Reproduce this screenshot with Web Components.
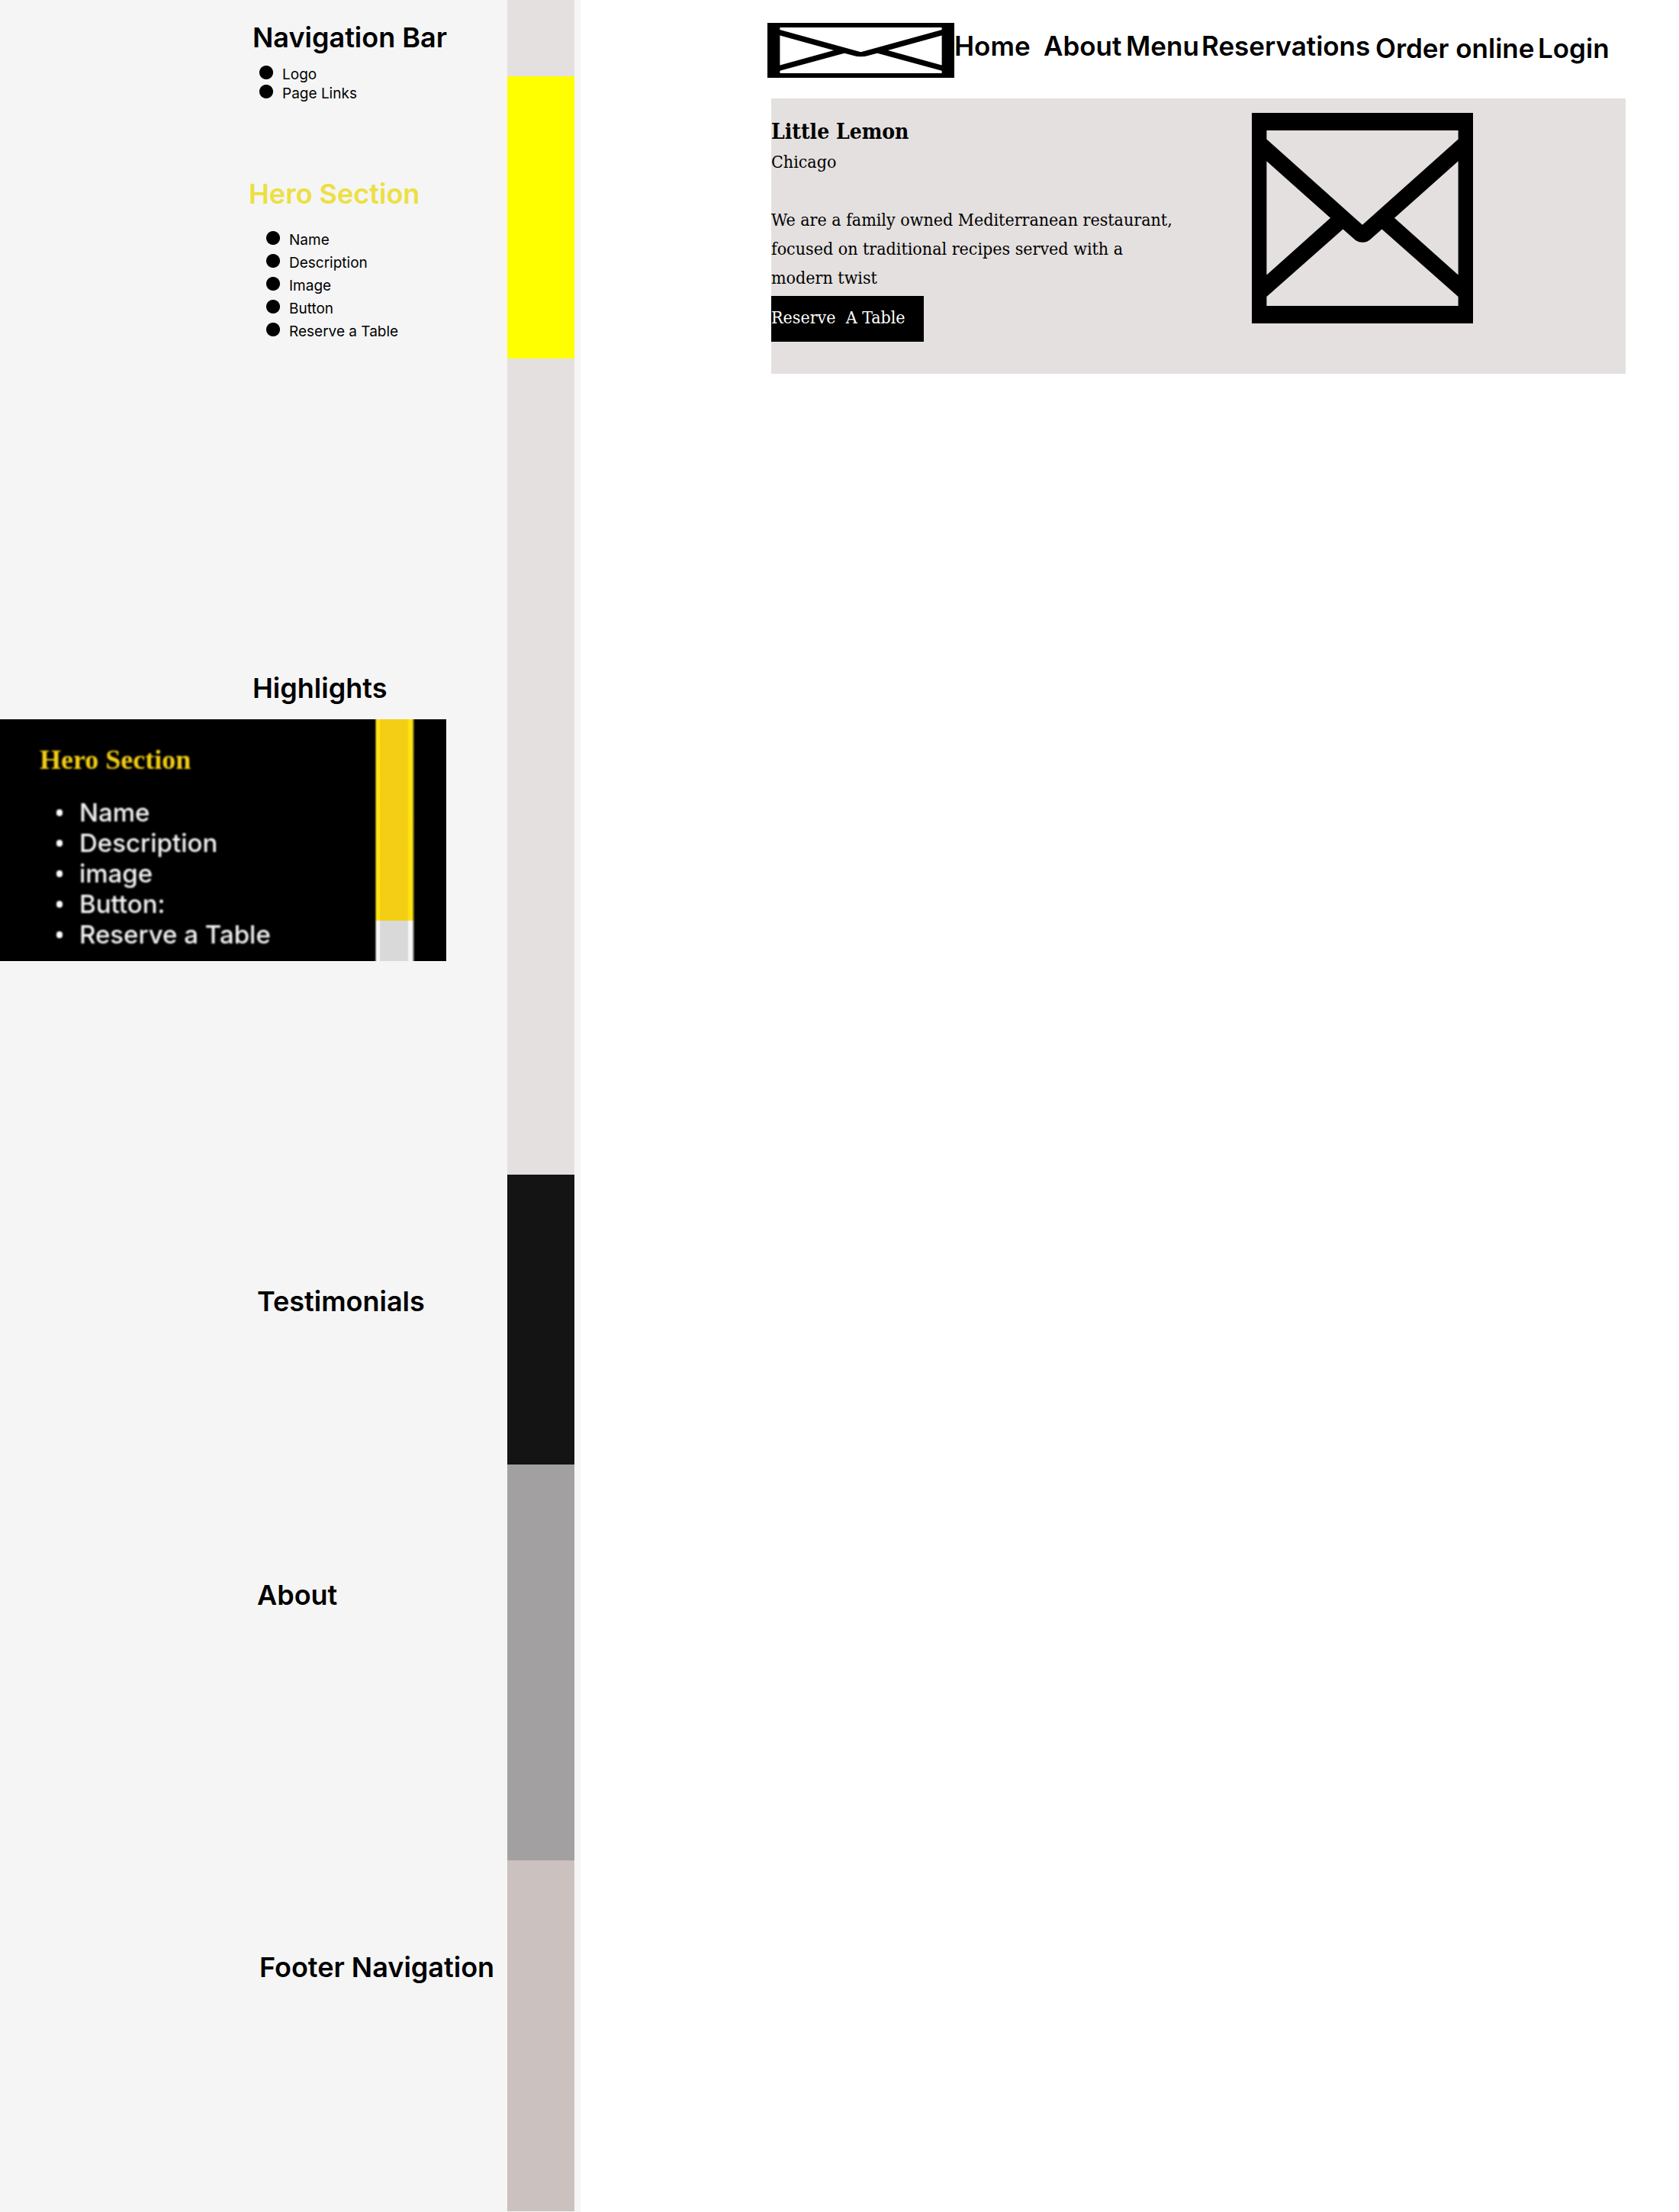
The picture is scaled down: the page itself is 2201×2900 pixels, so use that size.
<!DOCTYPE html>
<html lang="en">
<head>
<meta charset="utf-8">
<title>Little Lemon wireframe</title>
<style>
  body { margin: 0; background: #fff; color: #000; font-family: Inter, "Noto Sans", sans-serif; }
</style>
</head>
<body>
<wire-page>
  <outline-panel slot="outline">
    <outline-section heading="Navigation Bar" style="--top:29px;--indent:331px;--list-indent:9px;--row:25px;--list-gap:13px">
      <li>Logo</li><li>Page Links</li>
    </outline-section>
    <outline-section heading="Hero Section" style="--top:102px;--indent:326px;--list-indent:23px;--row:30px;--list-gap:25px;--heading:#ebe041">
      <li>Name</li><li>Description</li><li>Image</li><li>Button</li><li>Reserve a Table</li>
    </outline-section>
    <outline-section heading="Highlights" style="--top:433px;--indent:331px"></outline-section>
    <hero-note></hero-note>
    <outline-section heading="Testimonials" style="--top:426px;--indent:337px"></outline-section>
    <outline-section heading="About" style="--top:345px;--indent:337px"></outline-section>
    <outline-section heading="Footer Navigation" style="--top:448px;--indent:340px"></outline-section>
  </outline-panel>
  <site-header slot="content"></site-header>
  <site-hero slot="content"></site-hero>
</wire-page>

<script>
const define = (name, html, setup) => customElements.define(name, class extends HTMLElement {
  constructor() {
    super();
    this.attachShadow({ mode: "open" }).innerHTML = html;
  }
  connectedCallback() { if (setup) setup(this); }
});

define("envelope-icon", `
  <style>
    :host { display: block; }
    svg { display: block; width: 100%; height: 100%; }
  </style>
  <svg viewBox="0 0 290 276" preserveAspectRatio="none" aria-hidden="true">
    <path fill-rule="evenodd" d="M0 0H290V276H0Z
      M19.4 23V34.4L145 146.8L270.6 34.4V23Z
      M19.4 63.3V212.6L103 137.8Z
      M270.6 63.3V212.6L187 137.8Z
      M19.4 253V241L119.5 152.4L134 165.2Q138.500 169.800 145 169.800T156 165.200L170.500 152.400L270.600 241V253Z"/>
  </svg>`);

define("outline-section", `
  <style>
    :host { display: block; padding-top: var(--top); padding-left: var(--indent); }
    h2 { margin: 0; font-size: 36px; line-height: 40px; font-weight: 600; color: var(--heading, #000); white-space: nowrap; }
    ul { margin: var(--list-gap, 0) 0 0; padding: 0 0 0 var(--list-indent, 0); list-style: none; }
    ::slotted(li) {
      display: block; height: var(--row); padding-left: 30px; font-size: 19px; line-height: 32px;
      background: radial-gradient(circle at 9px 13px, #000 8.500px, transparent 9.500px) no-repeat;
    }
  </style>
  <h2></h2>
  <ul><slot></slot></ul>`,
  el => { el.shadowRoot.querySelector("h2").textContent = el.getAttribute("heading"); });

define("hero-note", `
  <style>
    :host { display: flex; width: 585px; height: 317px; margin-top: 21px; background: #000; color: #f4f4f4; }
    .copy { flex: 1; padding: 31px 0 0 52px; filter: blur(1px); }
    h3 { margin: 0; font: bold 36px/44px "Liberation Serif", serif; color: #f4ce14; }
    ul { margin: 27px 0 0; padding: 0 0 0 22px; list-style: none; }
    li { display: flex; align-items: center; gap: 22px; font-size: 33px; font-weight: 500; line-height: 40px; white-space: nowrap; }
    li::before { content: ""; width: 8px; height: 9px; border-radius: 4px; background: #fff; }
    .bar { width: 53px; margin-right: 41px; display: flex; flex-direction: column; }
    .bar i { flex: 1; background: linear-gradient(90deg, #000, #ffe414 3px 6px, #f4ce14 8px 43px, #ffe414 45px 49px, #000); }
    .bar i + i { flex: 0 0 53px; background: linear-gradient(90deg, #000, #f6f6f6 3px 6px, #d9d9d9 8px 43px, #f6f6f6 45px 49px, #000); }
  </style>
  <div class="copy">
    <h3>Hero Section</h3>
    <ul><li>Name</li><li>Description</li><li>image</li><li>Button:</li><li>Reserve a Table</li></ul>
  </div>
  <div class="bar"><i></i><i></i></div>`);

define("outline-panel", `
  <style>
    :host { display: flex; background: #f5f5f5; padding-right: 8px; box-sizing: border-box; }
    .sections { flex: 1; min-width: 0; }
    .strip { width: 88px; display: flex; flex-direction: column; }
    .strip div { background: #e4e0df; }
    .nav { height: 100px; }
    .strip .hero { height: 370px; background: #ff0; }
    .highlights { height: 1070px; }
    .strip .testimonials { height: 380px; background: #141414; }
    .strip .about { height: 519px; background: #a2a0a0; }
    .strip .footer { flex: 1; margin-bottom: 1px; background: #cbc1bf; }
  </style>
  <div class="sections"><slot></slot></div>
  <div class="strip">
    <div class="nav"></div><div class="hero"></div><div class="highlights"></div>
    <div class="testimonials"></div><div class="about"></div><div class="footer"></div>
  </div>`);

define("site-header", `
  <style>
    :host { display: flex; margin-left: -5px; padding-top: 30px; }
    envelope-icon { width: 245px; height: 72px; }
    nav { flex: 1; display: flex; padding-top: 10px; }
    ul { display: grid; margin: 0; padding: 0; list-style: none; line-height: 40px; }
    .pages { grid-template-columns: 117px 108px 99px 228px; }
    .account { grid-template-columns: 213px auto; line-height: 46px; }
    a { color: #000; text-decoration: none; font-size: 35px; font-weight: 600; white-space: nowrap; }
  </style>
  <envelope-icon></envelope-icon>
  <nav aria-label="Main">
    <ul class="pages">
      <li><a href="#home">Home</a></li><li><a href="#about">About</a></li>
      <li><a href="#menu">Menu</a></li><li><a href="#reservations">Reservations</a></li>
    </ul>
    <ul class="account">
      <li><a href="#order">Order online</a></li><li><a href="#login">Login</a></li>
    </ul>
  </nav>`);

define("site-hero", `
  <style>
    :host { display: flex; margin-top: 27px; padding: 19px 0 42px; background: #e4e0df; font: 23px/38px "DejaVu Serif Condensed", "DejaVu Serif", serif; }
    .copy { width: 630px; padding-top: 5px; }
    h1 { margin: 0; font-size: 28px; line-height: 40px; font-weight: bold; }
    p { margin: 0; max-width: 540px; }
    .about { margin: 38px 0 5px; }
    button { display: block; width: 200px; height: 60px; padding: 0 0 4px; border: 0; background: #000; color: #fff; font: inherit; text-align: left; white-space: pre; }
    envelope-icon { width: 290px; height: 276px; }
  </style>
  <div class="copy">
    <h1>Little Lemon</h1>
    <p>Chicago</p>
    <p class="about">We are a family owned Mediterranean restaurant, focused on traditional recipes served with a modern twist</p>
    <button type="button">Reserve  A Table</button>
  </div>
  <envelope-icon></envelope-icon>`);

define("wire-page", `
  <style>
    :host { display: flex; min-height: 100vh; }
    ::slotted(outline-panel) { flex: 0 0 761px; }
    main { flex: 1; padding: 0 70px 0 250px; }
  </style>
  <slot name="outline"></slot>
  <main><slot name="content"></slot></main>`);
</script>
</body>
</html>
